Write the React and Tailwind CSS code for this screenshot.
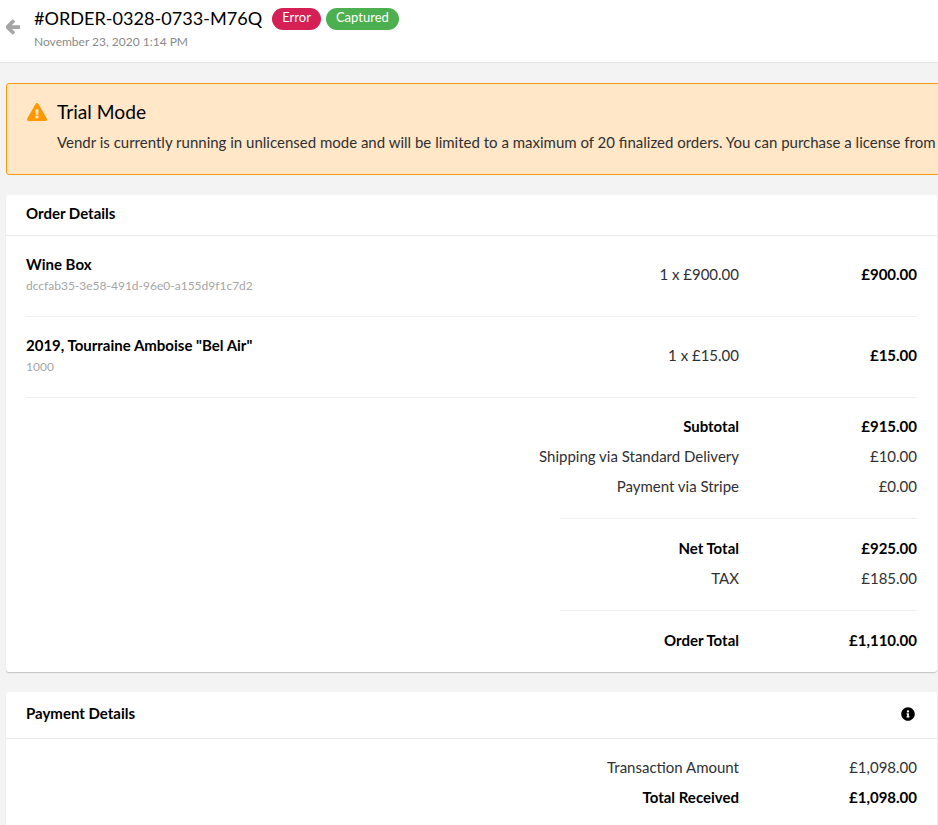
import React from "react";
import { FaArrowLeft, FaExclamationTriangle, FaInfoCircle } from "react-icons/fa";

const Row = ({ label, value, bold }) => (
  <div className={`flex h-[30px] items-center justify-end ${bold ? "font-bold text-[#000]" : "text-[#303033]"}`}>
    <span className="text-right">{label}</span>
    <span className="w-[178px] text-right">{value}</span>
  </div>
);

const Item = ({ name, sku, qty, total }) => (
  <div className="flex h-[81px] items-center border-b border-[#f0f0f0]">
    <div className="mb-[3px] flex-1">
      <div className="text-[15px] leading-[20px] font-bold text-[#000]">{name}</div>
      <div className="mt-[2px] text-[12px] leading-[20px] text-[#a5a5a5]">{sku}</div>
    </div>
    <span className="mb-[4px] text-[#303033]">{qty}</span>
    <span className="mb-[4px] w-[178px] text-right font-bold text-[#000]">{total}</span>
  </div>
);

export default function App() {
  return (
    <div className="h-[825px] w-[938px] overflow-hidden bg-[#f4f3f4] font-['Lato','Liberation_Sans',sans-serif] text-[15px]">
      {/* Header */}
      <div className="flex h-[63px] border-b border-[#e6e6e6] bg-white">
        <FaArrowLeft className="mt-[19px] ml-[6px] h-[16px] w-[14px] [stroke-width:40] text-[#a5a5a5]" />
        <div className="ml-[14px]">
          <div className="mt-[8px] flex items-center">
            <span className="relative top-[-1px] text-[18.1px] leading-[20px] text-[#000]">#ORDER-0328-0733-M76Q</span>
            <span className="ml-[10px] flex h-[22px] items-center rounded-full bg-[#d42054] px-[10px] pb-[2px] text-[13px] text-white">Error</span>
            <span className="ml-[5px] flex h-[22px] items-center rounded-full bg-[#4caf50] px-[10px] pb-[2px] text-[13px] text-white">Captured</span>
          </div>
          <div className="mt-[2px] text-[12px] leading-[20px] text-[#8a8a8a]">November 23, 2020 1:14 PM</div>
        </div>
      </div>

      <div className="pl-[6px] pr-px">
        {/* Alert */}
        <div className="mt-[20px] flex h-[92px] w-max rounded-[3px] border border-[#f79c0e] bg-[#ffe7c7] pl-[20px] pr-[20px]">
          <FaExclamationTriangle className="mt-[18px] h-[20px] w-[20px] text-[#ff9800]" />
          <div className="ml-[10px] whitespace-nowrap">
            <div className="mt-[14px] text-[19.2px] leading-[28px] text-[#000]">Trial Mode</div>
            <div className="mt-[6px] leading-[20px] text-[#303033]">
              Vendr is currently running in unlicensed mode and will be limited to a maximum of 20 finalized orders. You can purchase a license from the Vendr website.
            </div>
          </div>
        </div>

        {/* Order Details */}
        <div className="mt-[20px] h-[477px] rounded-[3px] bg-white shadow-[0_1px_1px_rgba(0,0,0,0.2)]">
          <div className="flex h-[41px] items-center border-b border-[#e9e9eb] px-[20px] pb-[4px] font-bold text-[#000]">Order Details</div>
          <div className="px-[20px]">
            <Item name="Wine Box" sku="dccfab35-3e58-491d-96e0-a155d9f1c7d2" qty="1 x £900.00" total="£900.00" />
            <Item name={'2019, Tourraine Amboise "Bel Air"'} sku="1000" qty="1 x £15.00" total="£15.00" />
            <div className="pt-[13px]">
              <Row label="Subtotal" value="£915.00" bold />
              <Row label="Shipping via Standard Delivery" value="£10.00" />
              <Row label="Payment via Stripe" value="£0.00" />
              <div className="mt-[17px] mb-[14px] ml-auto w-[357px] border-b border-[#f0f0f0]" />
              <Row label="Net Total" value="£925.00" bold />
              <Row label="TAX" value="£185.00" />
              <div className="mt-[17px] mb-[14px] ml-auto w-[357px] border-b border-[#f0f0f0]" />
              <Row label="Order Total" value="£1,110.00" bold />
            </div>
          </div>
        </div>

        {/* Payment Details */}
        <div className="mt-[20px] rounded-[3px] bg-white pb-[20px] shadow-[0_1px_1px_rgba(0,0,0,0.2)]">
          <div className="flex h-[47px] items-center justify-between border-b border-[#e9e9eb] px-[20px] pb-[3px] font-bold text-[#000]">
            <span>Payment Details</span>
            <FaInfoCircle className="mr-[2px] h-[14px] w-[14px]" />
          </div>
          <div className="px-[20px] pt-[13px]">
            <Row label="Transaction Amount" value="£1,098.00" />
            <Row label="Total Received" value="£1,098.00" bold />
          </div>
        </div>
      </div>
    </div>
  );
}
